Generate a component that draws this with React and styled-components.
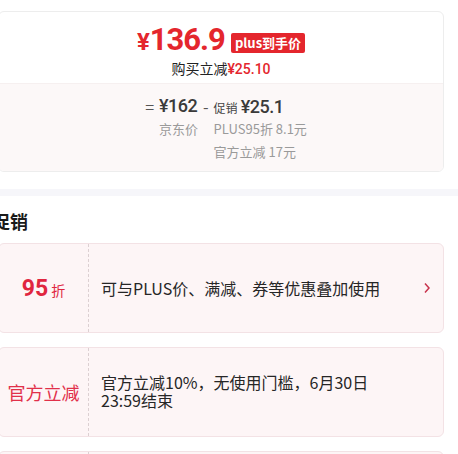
import React from "react";
import styled, { createGlobalStyle } from "styled-components";

const Global = createGlobalStyle`
  html, body { margin: 0; padding: 0; background: #fff; overflow: hidden; }
  body { font-family: "Noto Sans CJK SC", "Noto Sans", sans-serif; color: #262626; }
`;

const Page = styled.div`
  margin-left: -8px;
  width: calc(100% + 8px);
  padding-top: 11px;
  display: flex;
  flex-direction: column;
`;

const PriceCard = styled.div`
  margin: 0 14px 0 6px;
  border: 1px solid #ededed;
  border-radius: 6px;
  overflow: hidden;
  background: #fff;
`;

const PriceTop = styled.div`
  height: 71px;
  display: flex;
  flex-direction: column;
  align-items: center;
  padding-top: 12px;
  box-sizing: border-box;
`;

const PriceRow = styled.div`
  display: flex;
  align-items: center;
  gap: 6px;
  height: 34px;
`;

const BigPrice = styled.span`
  color: #e4262d;
  font-family: "Roboto", "Noto Sans", sans-serif;
  font-weight: 700;
  font-size: 31px;
  letter-spacing: -1px;
  line-height: 34px;
  small { font-size: 24px; margin-right: 1px; }
`;

const Badge = styled.span`
  background: #e4262d;
  color: #fff;
  font-weight: 700;
  font-size: 13px;
  line-height: 20px;
  padding: 0 4px;
  border-radius: 2px;
  margin-top: 3px;
`;

const Saving = styled.div`
  font-size: 14px;
  line-height: 18px;
  color: #222;
  margin-top: 1px;
  b { color: #e4262d; font-weight: 500; font-family: "Roboto", "Noto Sans CJK SC", sans-serif; }
`;

const PriceBottom = styled.div`
  background: #fcf8f8;
  border-top: 1px solid #f6f0f0;
  height: 88px;
  box-sizing: border-box;
  padding-top: 10px;
  display: flex;
  justify-content: center;
`;

const Breakdown = styled.div`
  display: grid;
  grid-template-columns: auto auto auto auto;
  column-gap: 5px;
  grid-auto-rows: 23px;
  align-items: center;
  margin-left: 10px;
`;

const Op = styled.span`
  color: #555;
  font-size: 16px;
  text-align: center;
`;

const Amount = styled.span`
  color: #3a3a3a;
  font-family: "Roboto", "Noto Sans", sans-serif;
  font-size: 18px;
  font-weight: 500;
  letter-spacing: -0.5px;
`;

const Label = styled.span`
  color: #444;
  font-size: 12px;
  margin-right: 3px;
`;

const Muted = styled.span`
  color: #9a9a9a;
  font-size: 13px;
  white-space: nowrap;
`;

const Bar = styled.div`
  height: 7px;
  background: #f6f6fa;
  margin-top: 17px;
`;

const Heading = styled.h2`
  margin: 12px 0 9px;
  font-size: 18px;
  line-height: 26px;
  font-weight: 700;
  color: #1a1a1a;
`;

const PromoList = styled.div`
  display: flex;
  flex-direction: column;
  gap: 14px;
`;

const PromoCard = styled.div`
  margin: 0 14px 0 6px;
  height: ${(p) => p.$h}px;
  flex: none;
  display: flex;
  align-items: stretch;
  background: #fdf5f6;
  border: 1px solid #f3e2e5;
  border-radius: 6px;
  box-sizing: border-box;
`;

const PromoTag = styled.div`
  width: 89px;
  flex: none;
  border-right: 1px dashed #dcd0d2;
  display: flex;
  align-items: center;
  justify-content: center;
  color: #e1304a;
  font-size: 18px;
`;

const Discount = styled.span`
  display: flex;
  align-items: baseline;
  gap: 3px;
  color: #e0263f;
  b {
    font-family: "Roboto", "Noto Sans", sans-serif;
    font-size: 23px;
    font-weight: 700;
  }
  small { font-size: 14px; }
`;

const PromoText = styled.div`
  flex: 1;
  display: flex;
  align-items: center;
  padding: 0 0 0 12px;
  font-size: 16px;
  line-height: 18px;
  color: #262626;
`;

const TextBlock = styled.div`
  width: 290px;
  margin-top: ${(p) => p.$dy || 0}px;
`;

const Chevron = styled.div`
  width: 40px;
  flex: none;
  display: flex;
  align-items: center;
  justify-content: flex-end;
  padding-right: 12px;
  box-sizing: border-box;
`;

export default function App() {
  return (
    <>
      <Global />
      <Page>
        <PriceCard>
          <PriceTop>
            <PriceRow>
              <BigPrice><small>¥</small>136.9</BigPrice>
              <Badge>plus到手价</Badge>
            </PriceRow>
            <Saving>购买立减<b>¥25.10</b></Saving>
          </PriceTop>
          <PriceBottom>
            <Breakdown>
              <Op>=</Op>
              <Amount>¥162</Amount>
              <Op>-</Op>
              <span><Label>促销</Label><Amount>¥25.1</Amount></span>
              <span />
              <Muted>京东价</Muted>
              <span />
              <Muted>PLUS95折 8.1元</Muted>
              <span />
              <span />
              <span />
              <Muted>官方立减 17元</Muted>
            </Breakdown>
          </PriceBottom>
        </PriceCard>
        <Bar />
        <Heading>促销</Heading>
        <PromoList>
          <PromoCard $h={90}>
            <PromoTag>
              <Discount><b>95</b><small>折</small></Discount>
            </PromoTag>
            <PromoText>
              <TextBlock>可与PLUS价、满减、券等优惠叠加使用</TextBlock>
            </PromoText>
            <Chevron>
              <svg width="8" height="12" viewBox="0 0 8 12">
                <path d="M2 1.5 L6 6 L2 10.5" fill="none" stroke="#c8334d" strokeWidth="1.5" />
              </svg>
            </Chevron>
          </PromoCard>
          <PromoCard $h={90}>
            <PromoTag>官方立减</PromoTag>
            <PromoText>
              <TextBlock $dy={-2}>官方立减10%，无使用门槛，6月30日 23:59结束</TextBlock>
            </PromoText>
            <Chevron />
          </PromoCard>
          <PromoCard $h={90}>
            <PromoTag />
            <PromoText />
            <Chevron />
          </PromoCard>
        </PromoList>
      </Page>
    </>
  );
}
